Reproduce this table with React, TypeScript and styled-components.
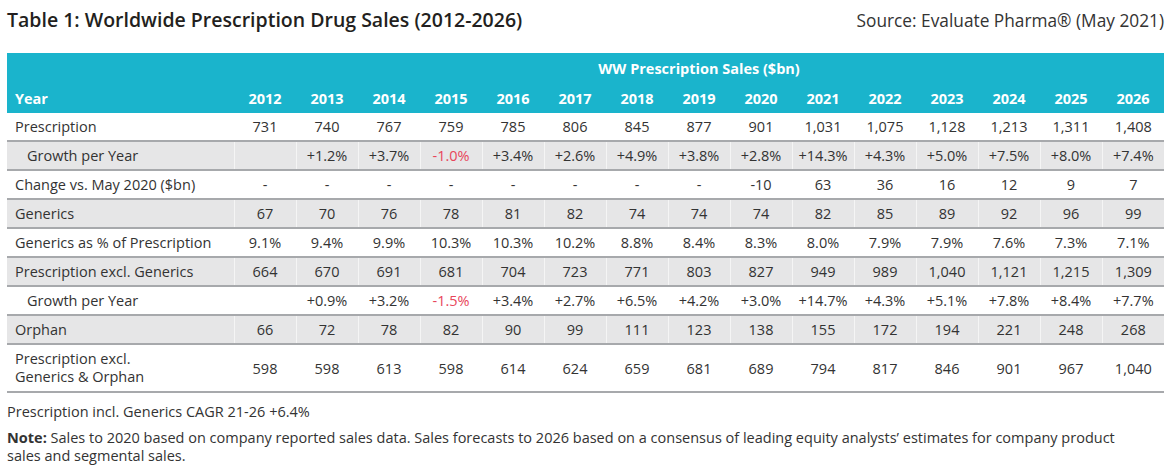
import React from "react";
import styled, { createGlobalStyle } from "styled-components";

const GlobalStyle = createGlobalStyle`
  body {
    margin: 0;
    background: #ffffff;
    font-family: "Open Sans", Lato, sans-serif;
    color: #333333;
  }
`;

const PageStyled = styled.div`
  width: 1172px;
  padding: 6px 8px 0 7px;
  box-sizing: border-box;
`;

const TitleBarStyled = styled.div`
  display: flex;
  justify-content: space-between;
  align-items: baseline;
  height: 47px;
`;

const TitleStyled = styled.h1`
  margin: 0;
  font-size: 19.5px;
  font-weight: 600;
  color: #231f20;
`;

const SourceStyled = styled.span`
  font-size: 17.3px;
  color: #333333;
`;

const TableStyled = styled.table`
  width: 1157px;
  border-collapse: collapse;
  table-layout: fixed;
  font-size: 14.5px;

  th,
  td {
    padding: 0;
  }
`;

const HeadCell = styled.th<{ $align?: "left" | "center" }>`
  background: #1ab4cc;
  color: #ffffff;
  font-weight: 700;
  text-align: ${(p) => p.$align || "center"};
  && {
    padding-left: ${(p) => (p.$align === "left" ? "8px" : "0")};
  }
  height: 29px;
  vertical-align: middle;
`;

const GroupCell = styled(HeadCell)`
  height: 31px;
`;

const Row = styled.tr<{ $shaded?: boolean }>`
  background: ${(p) => (p.$shaded ? "#e6e6e7" : "#ffffff")};
  border-bottom: 2px solid #a7a9ac;
`;

const LabelCell = styled.td<{ $indent?: boolean }>`
  && {
    padding-left: ${(p) => (p.$indent ? "20px" : "8px")};
  }
  height: 27px;
  line-height: 18px;
  text-align: left;
  white-space: nowrap;
`;

const ValueCell = styled.td<{ $negative?: boolean }>`
  text-align: center;
  color: ${(p) => (p.$negative ? "#e8455a" : "#333333")};
  border-left: 1px solid rgba(255, 255, 255, 0.6);
`;

const TallLabel = styled(LabelCell)`
  height: 46px;
  white-space: normal;
`;

const FooterStyled = styled.div`
  font-size: 14.5px;
  line-height: 18px;
  color: #333333;
  padding-top: 10px;
  width: 1135px;
`;

const FootLine = styled.p`
  margin: 0 0 8px;
`;

const years = [2012, 2013, 2014, 2015, 2016, 2017, 2018, 2019, 2020, 2021, 2022, 2023, 2024, 2025, 2026];

type RowData = {
  label: React.ReactNode;
  values: string[];
  shaded?: boolean;
  indent?: boolean;
  tall?: boolean;
};

const rows: RowData[] = [
  { label: "Prescription", values: ["731", "740", "767", "759", "785", "806", "845", "877", "901", "1,031", "1,075", "1,128", "1,213", "1,311", "1,408"] },
  { label: "Growth per Year", indent: true, shaded: true, values: ["", "+1.2%", "+3.7%", "-1.0%", "+3.4%", "+2.6%", "+4.9%", "+3.8%", "+2.8%", "+14.3%", "+4.3%", "+5.0%", "+7.5%", "+8.0%", "+7.4%"] },
  { label: "Change vs. May 2020 ($bn)", values: ["-", "-", "-", "-", "-", "-", "-", "-", "-10", "63", "36", "16", "12", "9", "7"] },
  { label: "Generics", shaded: true, values: ["67", "70", "76", "78", "81", "82", "74", "74", "74", "82", "85", "89", "92", "96", "99"] },
  { label: "Generics as % of Prescription", values: ["9.1%", "9.4%", "9.9%", "10.3%", "10.3%", "10.2%", "8.8%", "8.4%", "8.3%", "8.0%", "7.9%", "7.9%", "7.6%", "7.3%", "7.1%"] },
  { label: "Prescription excl. Generics", shaded: true, values: ["664", "670", "691", "681", "704", "723", "771", "803", "827", "949", "989", "1,040", "1,121", "1,215", "1,309"] },
  { label: "Growth per Year", indent: true, values: ["", "+0.9%", "+3.2%", "-1.5%", "+3.4%", "+2.7%", "+6.5%", "+4.2%", "+3.0%", "+14.7%", "+4.3%", "+5.1%", "+7.8%", "+8.4%", "+7.7%"] },
  { label: "Orphan", shaded: true, values: ["66", "72", "78", "82", "90", "99", "111", "123", "138", "155", "172", "194", "221", "248", "268"] },
  {
    label: (
      <>
        Prescription excl.
        <br />
        Generics &amp; Orphan
      </>
    ),
    tall: true,
    values: ["598", "598", "613", "598", "614", "624", "659", "681", "689", "794", "817", "846", "901", "967", "1,040"],
  },
];

const App = () => {
  return (
    <PageStyled>
      <GlobalStyle />
      <TitleBarStyled>
        <TitleStyled>Table 1: Worldwide Prescription Drug Sales (2012-2026)</TitleStyled>
        <SourceStyled>Source: Evaluate Pharma® (May 2021)</SourceStyled>
      </TitleBarStyled>
      <TableStyled>
        <colgroup>
          <col style={{ width: 227 }} />
          {years.map((y) => (
            <col key={y} style={{ width: 62 }} />
          ))}
        </colgroup>
        <thead>
          <tr>
            <GroupCell />
            <GroupCell colSpan={15}>WW Prescription Sales ($bn)</GroupCell>
          </tr>
          <tr>
            <HeadCell $align="left">Year</HeadCell>
            {years.map((y) => (
              <HeadCell key={y}>{y}</HeadCell>
            ))}
          </tr>
        </thead>
        <tbody>
          {rows.map((row, i) => {
            const Label = row.tall ? TallLabel : LabelCell;
            return (
              <Row key={i} $shaded={row.shaded}>
                <Label $indent={row.indent}>{row.label}</Label>
                {row.values.map((v, j) => (
                  <ValueCell key={j} $negative={v.startsWith("-") && v.length > 1 && v.endsWith("%")}>
                    {v}
                  </ValueCell>
                ))}
              </Row>
            );
          })}
        </tbody>
      </TableStyled>
      <FooterStyled>
        <FootLine>Prescription incl. Generics CAGR 21-26 +6.4%</FootLine>
        <FootLine>
          <strong>Note:</strong> Sales to 2020 based on company reported sales data. Sales forecasts to 2026 based on a
          consensus of leading equity analysts’ estimates for company product sales and segmental sales.
        </FootLine>
      </FooterStyled>
    </PageStyled>
  );
};

export default App;
